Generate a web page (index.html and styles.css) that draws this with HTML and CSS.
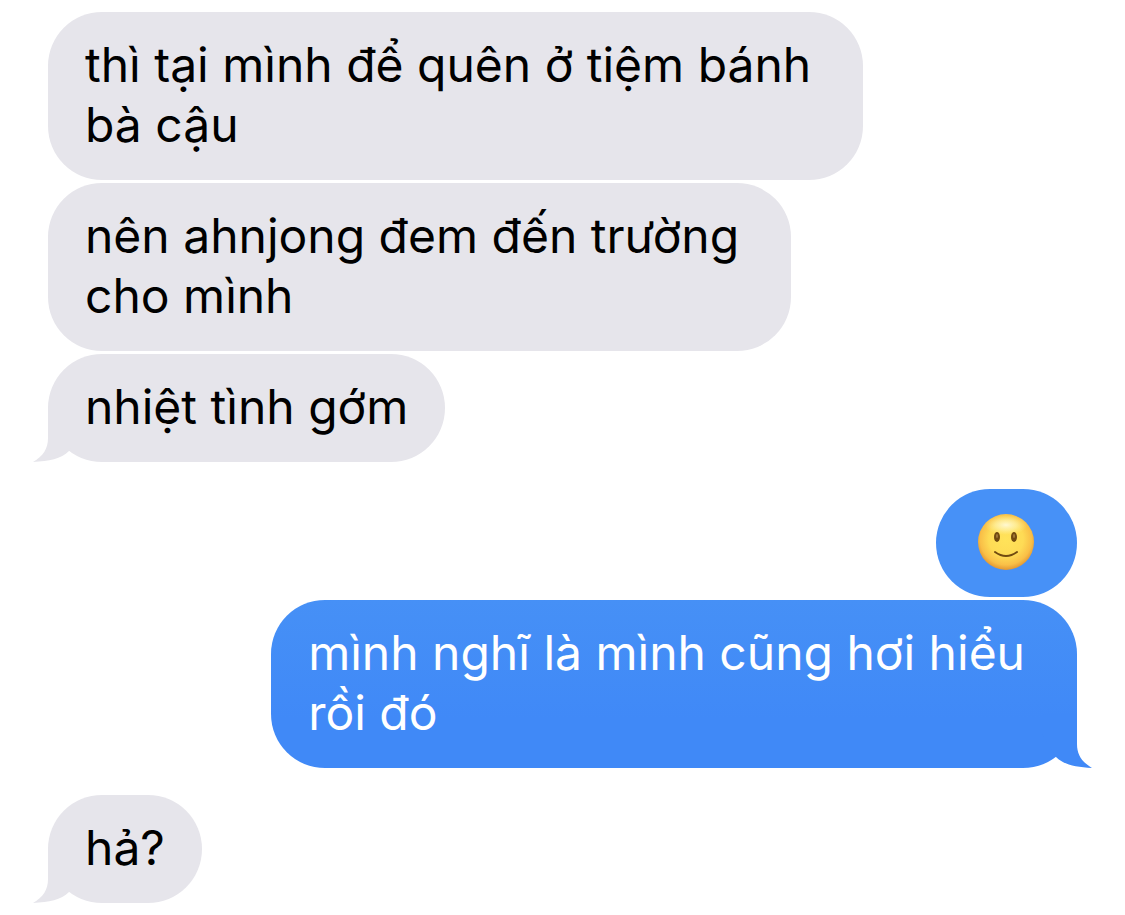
FILE: index.html
```html
<!DOCTYPE html>
<html lang="vi">
<head>
  <meta charset="UTF-8">
  <meta name="viewport" content="width=device-width, initial-scale=1.0">
  <title>Messages</title>
  <link rel="stylesheet" href="styles.css">
</head>
<body>
  <main class="chat">
    <div class="group received">
      <p class="bubble multi">thì tại mình để quên ở tiệm bánh<br>bà cậu</p>
      <p class="bubble multi">nên ahnjong đem đến trường<br>cho mình</p>
      <p class="bubble">nhiệt tình gớm
        <svg class="tail" viewBox="0 0 50 54" aria-hidden="true"><path d="M15 0V30C15 41 10 48 0 54C16 53 28 51 36 43L50 20V0Z"/></svg>
      </p>
    </div>
    <div class="group sent">
      <p class="bubble emoji">
        <svg class="smile" viewBox="0 0 60 60" role="img" aria-label="🙂">
          <defs>
            <radialGradient id="face" cx="0.5" cy="0.45" r="0.56">
              <stop offset="0" stop-color="#ffe35a"/>
              <stop offset="0.55" stop-color="#fedb55"/>
              <stop offset="0.82" stop-color="#f9bf47"/>
              <stop offset="1" stop-color="#e0912f"/>
            </radialGradient>
            <radialGradient id="shine">
              <stop offset="0" stop-color="#fffbe0" stop-opacity="0.9"/>
              <stop offset="0.5" stop-color="#fff6b8" stop-opacity="0.6"/>
              <stop offset="1" stop-color="#fff3a0" stop-opacity="0"/>
            </radialGradient>
          </defs>
          <circle cx="30" cy="29" r="28" fill="url(#face)"/>
          <ellipse cx="30" cy="12" rx="21" ry="10" fill="url(#shine)"/>
          <ellipse cx="21" cy="24" rx="3" ry="5" fill="#714a10"/>
          <ellipse cx="38" cy="24" rx="3" ry="5" fill="#714a10"/>
          <ellipse cx="21" cy="23" rx="1" ry="2" fill="#a27a3a"/>
          <ellipse cx="38" cy="23" rx="1" ry="2" fill="#a27a3a"/>
          <path d="M19 39Q30 47 41 39" fill="none" stroke="#714a10" stroke-width="2" stroke-linecap="round"/>
        </svg>
      </p>
      <p class="bubble multi">mình nghĩ là mình cũng hơi hiểu<br>rồi đó
        <svg class="tail" viewBox="0 0 50 54" aria-hidden="true"><path d="M15 0V30C15 41 10 48 0 54C16 53 28 51 36 43L50 20V0Z"/></svg>
      </p>
    </div>
    <div class="group received">
      <p class="bubble">hả?
        <svg class="tail" viewBox="0 0 50 54" aria-hidden="true"><path d="M15 0V30C15 41 10 48 0 54C16 53 28 51 36 43L50 20V0Z"/></svg>
      </p>
    </div>
  </main>
</body>
</html>
```
FILE: styles.css
```css
*{
  margin: 0;
  padding: 0;
  box-sizing: border-box;
}
body{
  background-color: #fff;
  font-family: Inter, "Noto Sans", sans-serif;
}
.chat{
  display: flex;
  flex-direction: column;
  gap: 27px;
  padding: 12px 48px;
}
.group{
  display: flex;
  flex-direction: column;
  align-items: flex-start;
  gap: 3px;
}
.sent{
  align-items: flex-end;
}
.bubble{
  position: relative;
  padding: 23px 37px 25px;
  border-radius: 54px;
  background-color: #e6e5eb;
  color: #000;
  font-size: 48px;
  line-height: 60px;
}
.multi{
  padding-right: 52px;
}
.sent .bubble{
  background: linear-gradient(#4690f6, #4089f7 70%);
  color: #fff;
}
.sent .emoji{
  padding: 24px 41px 24px 40px;
  background: #4791f7;
}
.tail{
  position: absolute;
  left: -15px;
  bottom: 0;
  width: 50px;
  height: 54px;
  fill: #e6e5eb;
}
.sent .tail{
  left: auto;
  right: -15px;
  fill: #4089f7;
  transform: scaleX(-1);
}
.smile{
  display: block;
  width: 60px;
  height: 60px;
}
```
